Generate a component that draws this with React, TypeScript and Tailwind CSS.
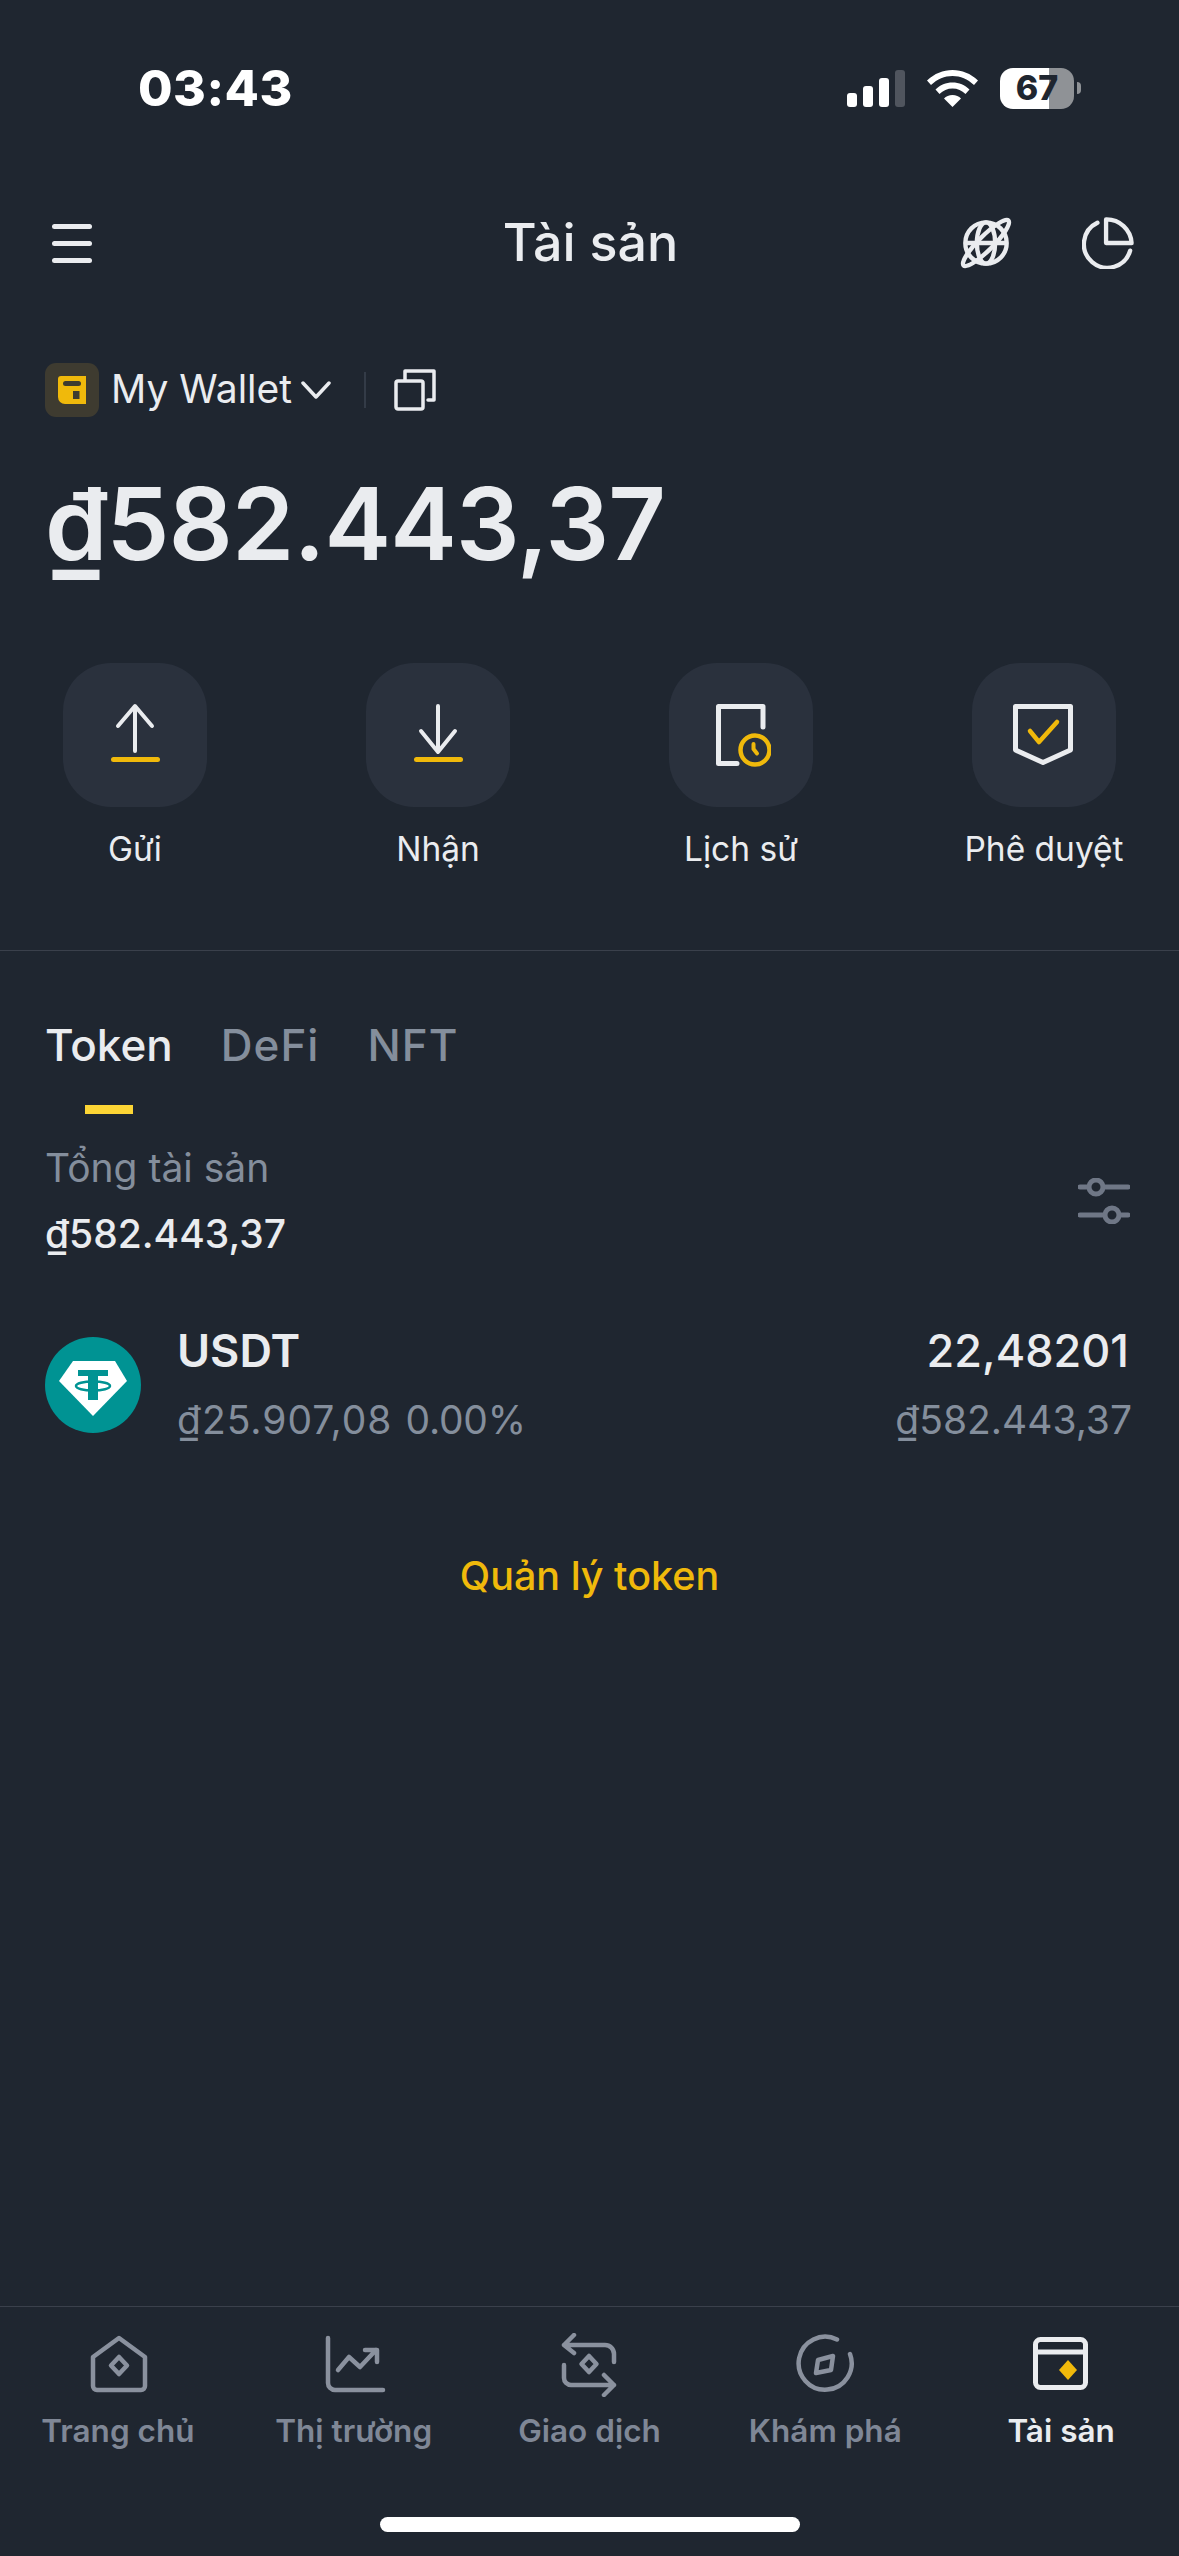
import { ReactNode } from 'react';

const GRAY = '#8A919E';

function UploadIcon() {
  return (
    <svg width="60" height="70" viewBox="0 0 60 70" fill="none">
      <path d="M30 51V7M13 26 30 6l17 20" stroke="#EAECEF" strokeWidth="4" strokeLinecap="round" strokeLinejoin="round" />
      <path d="M8.500 59.500h44" stroke="#F0B90B" strokeWidth="5" strokeLinecap="round" />
    </svg>
  );
}

function DownloadIcon() {
  return (
    <svg width="60" height="70" viewBox="0 0 60 70" fill="none">
      <path d="M30 6v45M13 31l17 21 17-21" stroke="#EAECEF" strokeWidth="4" strokeLinecap="round" strokeLinejoin="round" />
      <path d="M8.500 59.500h44" stroke="#F0B90B" strokeWidth="5" strokeLinecap="round" />
    </svg>
  );
}

function HistoryIcon() {
  return (
    <svg width="60" height="70" viewBox="0 0 60 70" fill="none">
      <path d="M52 27V6.500H7.500v57H26" stroke="#EAECEF" strokeWidth="5" strokeLinecap="round" strokeLinejoin="round" />
      <circle cx="44" cy="50" r="14.500" stroke="#F0B90B" strokeWidth="4.500" />
      <path d="M42.500 44v5l3.500 4.500" stroke="#F0B90B" strokeWidth="4" strokeLinecap="round" strokeLinejoin="round" />
    </svg>
  );
}

function ApproveIcon() {
  return (
    <svg width="66" height="70" viewBox="0 0 66 70" fill="none">
      <path d="M4.500 6.500h55V50L32 62.500 4.500 50z" stroke="#EAECEF" strokeWidth="5" strokeLinejoin="round" />
      <path d="m19 31 9 11 18-20" stroke="#F0B90B" strokeWidth="4.500" strokeLinecap="round" strokeLinejoin="round" />
    </svg>
  );
}

function NavIcon({ children }: { children: ReactNode }) {
  return (
    <svg width="64" height="64" viewBox="0 0 64 64" fill="none" stroke={GRAY} strokeWidth="4.500" strokeLinecap="round" strokeLinejoin="round">
      {children}
    </svg>
  );
}

const actions = [
  { label: 'Gửi', icon: <UploadIcon /> },
  { label: 'Nhận', icon: <DownloadIcon /> },
  { label: 'Lịch sử', icon: <HistoryIcon /> },
  { label: 'Phê duyệt', icon: <ApproveIcon /> },
];

const navItems = [
  {
    label: 'Trang chủ',
    icon: (
      <NavIcon>
        <path d="M33 5 7 24v29a4 4 0 0 0 4 4h44a4 4 0 0 0 4-4V24z" />
        <path d="m33 24 8 8.500-8 8.500-8-8.500z" />
      </NavIcon>
    ),
  },
  {
    label: 'Thị trường',
    icon: (
      <NavIcon>
        <path d="M6 5v45a7 7 0 0 0 7 7h48" />
        <path d="m16 37 11-13 11 10 16-17M43 17h12v12" />
      </NavIcon>
    ),
  },
  {
    label: 'Giao dịch',
    icon: (
      <NavIcon>
        <path d="M7 12h41a9 9 0 0 1 9 9v8M17 2 7 12l10 8" />
        <path d="M7 32v13a7 7 0 0 0 7 7h43M47 42l10 10-10 10" />
        <path d="m32 23 7.500 8-7.500 8-7.500-8z" />
      </NavIcon>
    ),
  },
  {
    label: 'Khám phá',
    icon: (
      <NavIcon>
        <path d="M44 6.500A26.500 26.500 0 1 0 57 21" />
        <path d="m25 27 15-4-2 14-15 3z" />
      </NavIcon>
    ),
  },
];

export default function App() {
  return (
    <div className="w-[1179px] h-[2556px] bg-[#1F2630] text-[#EAECEF] flex flex-col font-['Inter',sans-serif]">
      {/* status bar */}
      <div className="h-[176px] flex items-center justify-between pl-[138px] pr-[98px] shrink-0">
        <span className="text-[50px] font-extrabold text-white tracking-[0.5px]">03:43</span>
        <div className="flex items-center gap-[22px]">
          <div className="flex items-end gap-[6px] h-[37px]">
            <div className="w-[10px] h-[14px] bg-white rounded-[3px]" />
            <div className="w-[10px] h-[21px] bg-white rounded-[3px]" />
            <div className="w-[10px] h-[29px] bg-white rounded-[3px]" />
            <div className="w-[10px] h-[37px] bg-[#50555E] rounded-[3px]" />
          </div>
          <svg width="51" height="37" viewBox="0 0 51 37" fill="white">
            <path d="M25.500 0C16 0 7.500 3.500 0 10.500l4 4.500C10.500 9 17.500 6 25.500 6s15 3 21.500 9l4-4.500C43.500 3.500 35 0 25.500 0z" />
            <path d="M25.500 12.500c-6.500 0-12.500 2.500-17 7l4 4.500c3.500-3.500 8-5.500 13-5.500s9.500 2 13 5.500l4-4.500c-4.500-4.500-10.500-7-17-7z" />
            <path d="M25.500 25c-3.500 0-6.500 1.300-8.500 3.500L25.500 37 34 28.500c-2-2.200-5-3.500-8.500-3.500z" />
          </svg>
          <div className="flex items-center gap-[3px]">
            <div className="w-[74px] h-[41px] rounded-[13px] bg-[linear-gradient(90deg,#fff_66%,#8F9296_66%)] flex items-center justify-center text-[#1F2630] text-[34px] font-extrabold leading-none">
              67
            </div>
            <div className="w-[4px] h-[12px] bg-[#8F9296] rounded-r-[4px]" />
          </div>
        </div>
      </div>

      {/* header */}
      <div className="h-[134px] shrink-0 grid grid-cols-3 items-center pl-[47px] pr-[45px]">
        <div className="flex flex-col gap-[12px] w-[40px] ml-[5px]">
          <div className="h-[5px] rounded-full bg-[#EAECEF]" />
          <div className="h-[5px] rounded-full bg-[#EAECEF]" />
          <div className="h-[5px] rounded-full bg-[#EAECEF]" />
        </div>
        <div className="text-center text-[52px] font-medium">Tài sản</div>
        <div className="flex justify-end items-center gap-[70px]">
          <svg width="52" height="52" viewBox="0 0 54 54" fill="none" stroke="#EAECEF" strokeWidth="4.500">
            <circle cx="27" cy="27" r="21.500" />
            <ellipse cx="27" cy="27" rx="9.500" ry="21.500" />
            <path d="M6 27h42" />
            <ellipse cx="27" cy="27" rx="33" ry="7.500" transform="rotate(-45 27 27)" />
          </svg>
          <svg width="52" height="52" viewBox="0 0 54 54" fill="none" stroke="#EAECEF" strokeWidth="4.500" strokeLinejoin="round" strokeLinecap="round">
            <path d="M16 6A24.500 24.500 0 1 0 50 35" />
            <path d="M25 2.500A26 26 0 0 1 51.500 27H25z" />
          </svg>
        </div>
      </div>

      {/* wallet selector */}
      <div className="mt-[53px] h-[54px] shrink-0 flex items-center pl-[45px]">
        <div className="w-[54px] h-[54px] rounded-[11px] bg-[#3E3B30] flex items-center justify-center">
          <svg width="28" height="28" viewBox="0 0 28 28">
            <path d="M3 0h25v28H7a7 7 0 0 1-7-7V3a3 3 0 0 1 3-3z" fill="#F0B90B" />
            <rect x="5" y="5" width="18" height="5" rx="2.500" fill="#3E3B30" />
            <rect x="15" y="15" width="6.500" height="8" fill="#3E3B30" />
          </svg>
        </div>
        <span className="ml-[12px] pb-[4px] text-[39px] leading-none">My Wallet</span>
        <svg className="ml-[9px]" width="30" height="18" viewBox="0 0 30 18" fill="none" stroke="#EAECEF" strokeWidth="3.500" strokeLinecap="round" strokeLinejoin="round">
          <path d="m2 2 13 14L28 2" />
        </svg>
        <div className="ml-[33px] w-[2px] h-[36px] bg-[#333B47]" />
        <svg className="ml-[28px]" width="42" height="42" viewBox="0 0 42 42" fill="none" stroke="#EAECEF" strokeWidth="3.500" strokeLinecap="round" strokeLinejoin="round">
          <rect x="2" y="12" width="27" height="28" rx="2" />
          <path d="M11 11V2h29v29h-6" />
        </svg>
      </div>

      {/* balance */}
      <div className="mt-[46px] h-[122px] shrink-0 pl-[45px] flex items-center text-[100px] font-semibold leading-none tracking-[-0.8px] text-[#EAECEF]">
        ₫582.443,37
      </div>

      {/* quick actions */}
      <div className="mt-[78px] shrink-0 flex justify-between px-[63px]">
        {actions.map((action) => (
          <div key={action.label} className="w-[144px] flex flex-col items-center">
            <div className="w-[144px] h-[144px] rounded-[48px] bg-[#2A313D] flex items-center justify-center">
              {action.icon}
            </div>
            <span className="mt-[23px] text-[33.500px] leading-[38px] whitespace-nowrap">{action.label}</span>
          </div>
        ))}
      </div>

      <div className="mt-[82px] h-[1px] bg-[#3A404B] shrink-0" />

      {/* tabs */}
      <div className="mt-[66px] flex gap-[48px] pl-[45px] shrink-0 text-[44px] leading-[56px] font-medium">
        <div className="flex flex-col items-center">
          <span>Token</span>
          <div className="mt-[32px] w-[48px] h-[9px] bg-[#FCD535]" />
        </div>
        <span className="text-[#848E9C] tracking-[1px]">DeFi</span>
        <span className="text-[#848E9C] tracking-[1px]">NFT</span>
      </div>

      {/* total */}
      <div className="mt-[31px] shrink-0 flex items-center justify-between pl-[45px] pr-[49px]">
        <div className="flex flex-col gap-[20px]">
          <span className="text-[39px] leading-[46px] text-[#848E9C]">Tổng tài sản</span>
          <span className="text-[39px] leading-[46px] font-medium">₫582.443,37</span>
        </div>
        <svg width="52" height="46" viewBox="0 0 52 46" fill="none" stroke="#6F7786" strokeWidth="5" strokeLinecap="round">
          <path d="M2 9h8M26 9h24M2 37h24M42 37h8" />
          <circle cx="18" cy="9" r="7" />
          <circle cx="34" cy="37" r="7" />
        </svg>
      </div>

      {/* token row */}
      <div className="mt-[69px] shrink-0 flex items-center pl-[45px] pr-[47px]">
        <svg width="96" height="96" viewBox="0 0 96 96">
          <circle cx="48" cy="48" r="48" fill="#009393" />
          <path d="M28 24h42l12 20-34 35-34-35z" fill="#fff" />
          <path d="M33 33h30v6H53v24H43V39H33z" fill="#009393" />
          <ellipse cx="48" cy="49" rx="17" ry="4.500" fill="none" stroke="#009393" strokeWidth="2.500" />
        </svg>
        <div className="ml-[36px] flex flex-col gap-[21px]">
          <span className="text-[45px] leading-[50px] font-semibold">USDT</span>
          <div className="flex gap-[13px] text-[39px] leading-[46px] text-[#848E9C]">
            <span className="tracking-[1px]">₫25.907,08</span>
            <span className="tracking-[-0.2px]">0.00%</span>
          </div>
        </div>
        <div className="ml-auto flex flex-col items-end gap-[21px]">
          <span className="text-[45px] leading-[50px] font-medium mr-[3px]">22,48201</span>
          <span className="text-[39px] leading-[46px] text-[#848E9C]">₫582.443,37</span>
        </div>
      </div>

      <div className="mt-[109px] text-center text-[39.500px] leading-[48px] font-medium text-[#F0B90B] shrink-0">
        Quản lý token
      </div>

      {/* bottom nav */}
      <div className="mt-auto h-[250px] shrink-0 border-t border-[#3A404B] flex flex-col">
        <div className="grid grid-cols-5 pt-[26px]">
          {navItems.map((item) => (
            <div key={item.label} className="flex flex-col items-center">
              {item.icon}
              <span className="mt-[14px] text-[31.500px] leading-[40px] font-semibold text-[#7F8796]">{item.label}</span>
            </div>
          ))}
          <div className="flex flex-col items-center">
            <svg width="64" height="64" viewBox="0 0 64 64" fill="none">
              <rect x="6.500" y="6.500" width="50" height="48" rx="5" stroke="#EAECEF" strokeWidth="5" />
              <path d="M6.500 19h50" stroke="#EAECEF" strokeWidth="5" />
              <path d="m39 27 9 10-9 10-9-10z" fill="#F0B90B" />
            </svg>
            <span className="mt-[14px] text-[31.500px] leading-[40px] font-semibold text-[#EAECEF]">Tài sản</span>
          </div>
        </div>
        <div className="mt-auto mb-[24px] mx-auto w-[420px] h-[15px] rounded-full bg-white" />
      </div>
    </div>
  );
}
